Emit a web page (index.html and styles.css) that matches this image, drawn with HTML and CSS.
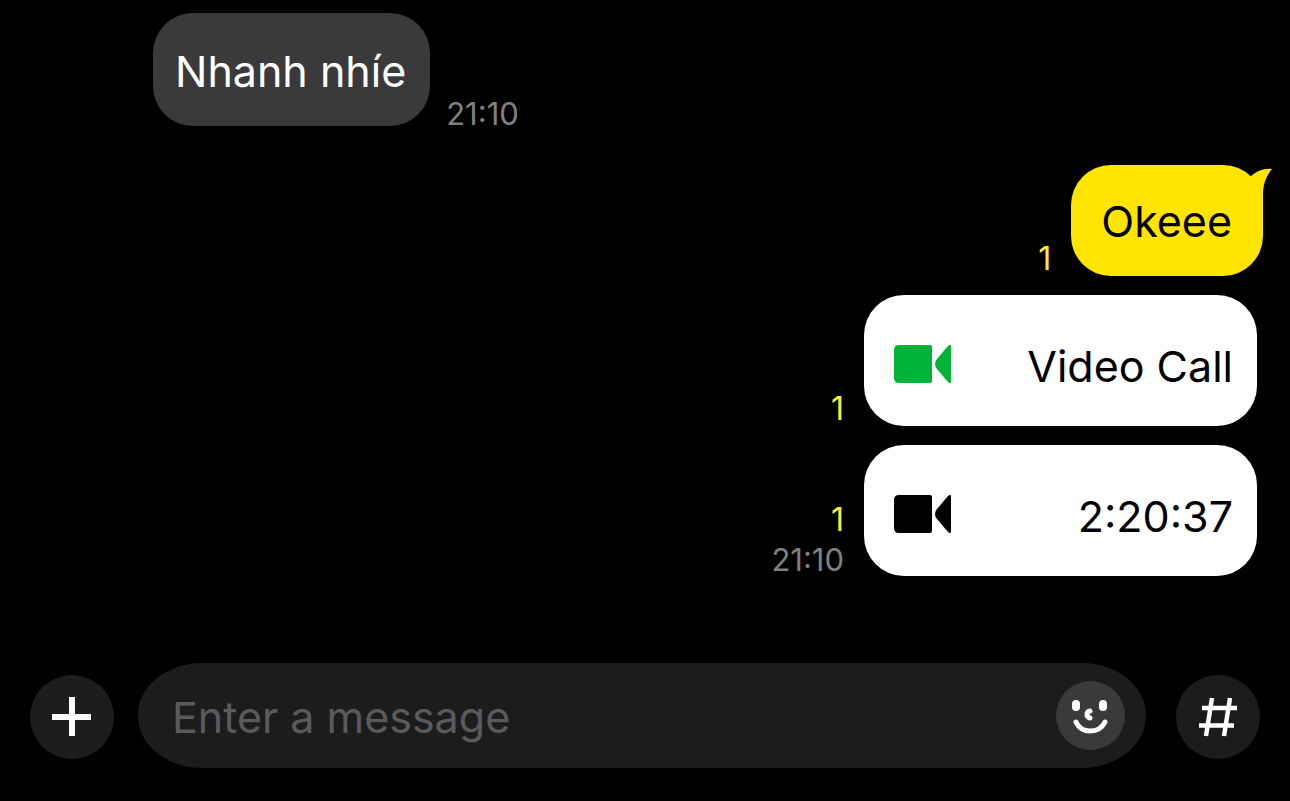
FILE: index.html
```html
<!DOCTYPE html>
<html lang="en">
<head>
  <meta charset="UTF-8">
  <meta name="viewport" content="width=device-width, initial-scale=1.0">
  <title>Chat</title>
  <link rel="stylesheet" href="styles.css">
</head>
<body>
  <main class="messages">
    <div class="message received">
      <div class="bubble">Nhanh nhíe</div>
      <div class="meta">
        <span class="time">21:10</span>
      </div>
    </div>

    <div class="message sent first">
      <div class="meta">
        <span class="unread">1</span>
      </div>
      <div class="bubble">
        Okeee
        <svg class="tail" width="24" height="40" viewBox="0 0 24 40" aria-hidden="true">
          <path d="M2 10C8 5 15 2 23 3C18 9 14 17 14 29L14 40L0 40Z" fill="#ffe500"/>
        </svg>
      </div>
    </div>

    <div class="message sent">
      <div class="meta">
        <span class="unread">1</span>
      </div>
      <div class="call-card">
        <svg class="video-icon green" width="58" height="38" viewBox="0 0 58 38" aria-hidden="true">
          <path d="M5 0H36Q38 0 38 2V36Q38 38 36 38H5Q0 38 0 33V5Q0 0 5 0Z"/>
          <path d="M54 1Q55 0 56 0Q57 0 57 1V37Q57 38 56 38Q55 38 54 37L43 24Q41 22 41 19Q41 16 43 14Z"/>
        </svg>
        <span>Video Call</span>
      </div>
    </div>

    <div class="message sent">
      <div class="meta">
        <span class="unread">1</span>
        <span class="time">21:10</span>
      </div>
      <div class="call-card">
        <svg class="video-icon" width="58" height="38" viewBox="0 0 58 38" aria-hidden="true">
          <path d="M5 0H36Q38 0 38 2V36Q38 38 36 38H5Q0 38 0 33V5Q0 0 5 0Z"/>
          <path d="M54 1Q55 0 56 0Q57 0 57 1V37Q57 38 56 38Q55 38 54 37L43 24Q41 22 41 19Q41 16 43 14Z"/>
        </svg>
        <span>2:20:37</span>
      </div>
    </div>
  </main>

  <form class="composer">
    <button type="button" class="round-button" aria-label="Add">
      <svg width="84" height="84" viewBox="0 0 84 84">
        <path d="M22 42H61M42 22V61" fill="none" stroke="#fff" stroke-width="6"/>
      </svg>
    </button>
    <div class="field">
      <input type="text" placeholder="Enter a message" aria-label="Message">
      <button type="button" class="sticker-button" aria-label="Stickers">
        <svg width="69" height="69" viewBox="0 0 69 69">
          <rect x="16" y="19" width="8" height="11" rx="4" fill="#fff"/>
          <rect x="43" y="19" width="8" height="11" rx="4" fill="#fff"/>
          <path d="M34 30C30 31 30 36 34 37" fill="none" stroke="#fff" stroke-width="5" stroke-linecap="round"/>
          <path d="M20 41C25 53 43 53 49 41" fill="none" stroke="#fff" stroke-width="5" stroke-linecap="round"/>
        </svg>
      </button>
    </div>
    <button type="button" class="round-button" aria-label="Hashtag">
      <svg width="84" height="84" viewBox="0 0 84 84">
        <path d="M36 23L30 61M54 23L48 61M26 33H61M23 50.500H58" fill="none" stroke="#fff" stroke-width="4.500"/>
      </svg>
    </button>
  </form>
</body>
</html>
```

FILE: styles.css
```css
* {
  box-sizing: border-box;
}
body {
  display: flex;
  flex-direction: column;
  min-height: 100vh;
  margin: 0;
  background-color: #000;
  color: #000;
  font-family: Inter, "Liberation Sans", sans-serif;
  font-size: 43px;
  line-height: 53px;
}
.messages {
  flex: 1;
  display: flex;
  flex-direction: column;
  gap: 19px;
  padding: 13px 33px 20px 153px;
}
.message {
  display: flex;
  align-items: flex-end;
}
.received {
  gap: 16px;
}
.sent {
  justify-content: flex-end;
  gap: 20px;
}
.first {
  margin-top: 20px;
  margin-right: -6px;
}
.bubble {
  position: relative;
  padding: 30px 31px 28px 30px;
  border-radius: 40px;
  background-color: #ffe500;
}
.received .bubble {
  padding: 32px 24px 28px 22px;
  background-color: #3a3a3c;
  color: #fff;
}
.tail {
  position: absolute;
  top: 1px;
  right: -10px;
}
.call-card {
  display: flex;
  align-items: center;
  justify-content: space-between;
  width: 393px;
  padding: 45px 24px 33px 30px;
  border-radius: 40px;
  background-color: #fff;
}
.video-icon {
  margin-bottom: 6px;
}
.green {
  fill: #00b43a;
}
.meta {
  display: flex;
  flex-direction: column;
  align-items: flex-end;
}
.unread {
  color: #ffee33;
  font-size: 32px;
  line-height: 34px;
}
.time {
  color: #808080;
  font-size: 31px;
  line-height: 24px;
}
.unread + .time {
  padding: 11px 0 4px;
}
.composer {
  display: flex;
  align-items: center;
  padding: 0 30px 33px;
}
button {
  flex: none;
  padding: 0;
  border: none;
  border-radius: 50%;
  cursor: pointer;
}
button svg {
  display: block;
}
.round-button {
  width: 84px;
  height: 84px;
  margin-top: 2px;
  background-color: #1c1c1c;
}
.field {
  flex: 1;
  display: flex;
  align-items: center;
  min-width: 0;
  height: 105px;
  margin: 0 30px 0 24px;
  padding: 0 21px 0 34px;
  border-radius: 64px / 52px;
  background-color: #1c1c1c;
}
.field input {
  flex: 1;
  min-width: 0;
  padding: 4px 0 0;
  border: none;
  outline: none;
  background: none;
  color: #fff;
  font: inherit;
}
.field input::placeholder {
  color: #5a5a5e;
}
.sticker-button {
  width: 69px;
  height: 69px;
  background-color: #3a3a3a;
}
```
